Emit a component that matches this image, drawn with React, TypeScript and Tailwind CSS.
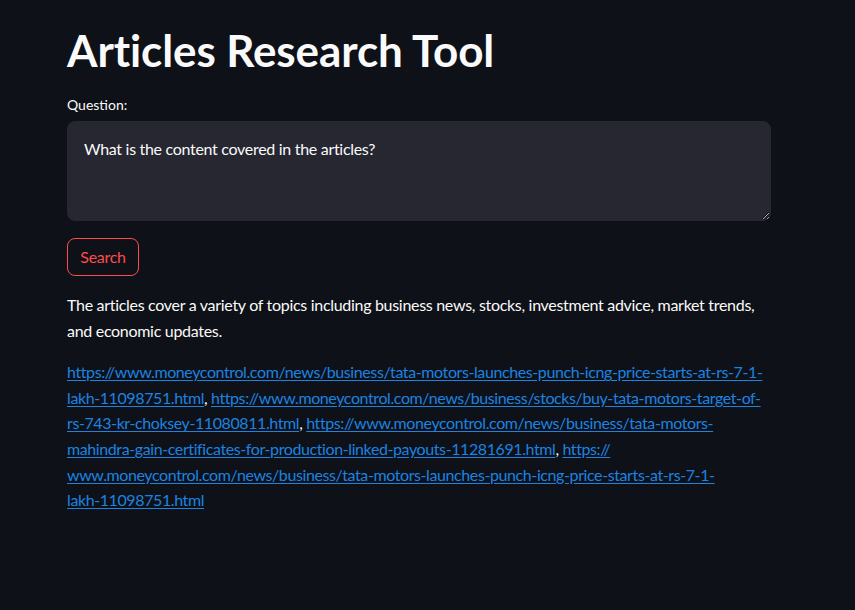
const links = [
  "https://www.moneycontrol.com/news/business/tata-motors-launches-punch-icng-price-starts-at-rs-7-1-lakh-11098751.html",
  "https://www.moneycontrol.com/news/business/stocks/buy-tata-motors-target-of-rs-743-kr-choksey-11080811.html",
  "https://www.moneycontrol.com/news/business/tata-motors-mahindra-gain-certificates-for-production-linked-payouts-11281691.html",
];

function Link({ href, lines }: { href: string; lines: string[] }) {
  return (
    <a href={href} className="text-[#1c83e1] underline underline-offset-[2px]">
      {lines.map((l, i) => (
        <span key={i}>
          {i > 0 && <br />}
          {l}
        </span>
      ))}
    </a>
  );
}

export default function App() {
  return (
    <div
      className="min-h-screen bg-[#0e1117] text-[#fafafa] text-[16px] tracking-[-0.3px]"
      style={{ fontFamily: 'Lato, "Noto Sans", sans-serif' }}
    >
      <div className="ml-[67px] w-[704px] pt-6">
        <h1 className="text-[44px] font-bold leading-[52px] tracking-[-0.1px]">Articles Research Tool</h1>

        <div className="mt-[19px] text-[14px] leading-[20px] tracking-normal">Question:</div>
        <textarea
          className="mt-[6px] block h-[100px] w-full resize-y rounded-lg border border-[#262730] bg-[#262730] px-4 pt-[14px] text-[16px] leading-[25.6px] text-[#fafafa] outline-none [color-scheme:dark]"
          style={{ fontFamily: 'Lato, "Noto Sans", sans-serif' }}
          defaultValue="What is the content covered in the articles?"
        />

        <button className="mt-[17px] flex h-[38px] w-[72px] items-center justify-center rounded-lg border border-[#ff4b4b] text-[16px] text-[#ff4b4b]">
          Search
        </button>

        <p className="mt-4 leading-[25.6px] whitespace-nowrap">
          The articles cover a variety of topics including business news, stocks, investment advice, market trends,
          <br />
          and economic updates.
        </p>

        <p className="mt-4 leading-[25.6px] whitespace-nowrap tracking-[-0.4px]">
          <Link
            href={links[0]}
            lines={["https://www.moneycontrol.com/news/business/tata-motors-launches-punch-icng-price-starts-at-rs-7-1-", "lakh-11098751.html"]}
          />
          ,{" "}
          <Link
            href={links[1]}
            lines={["https://www.moneycontrol.com/news/business/stocks/buy-tata-motors-target-of-", "rs-743-kr-choksey-11080811.html"]}
          />
          ,{" "}
          <Link
            href={links[2]}
            lines={["https://www.moneycontrol.com/news/business/tata-motors-", "mahindra-gain-certificates-for-production-linked-payouts-11281691.html"]}
          />
          ,{" "}
          <Link
            href={links[0]}
            lines={["https://", "www.moneycontrol.com/news/business/tata-motors-launches-punch-icng-price-starts-at-rs-7-1-", "lakh-11098751.html"]}
          />
        </p>
      </div>
    </div>
  );
}
